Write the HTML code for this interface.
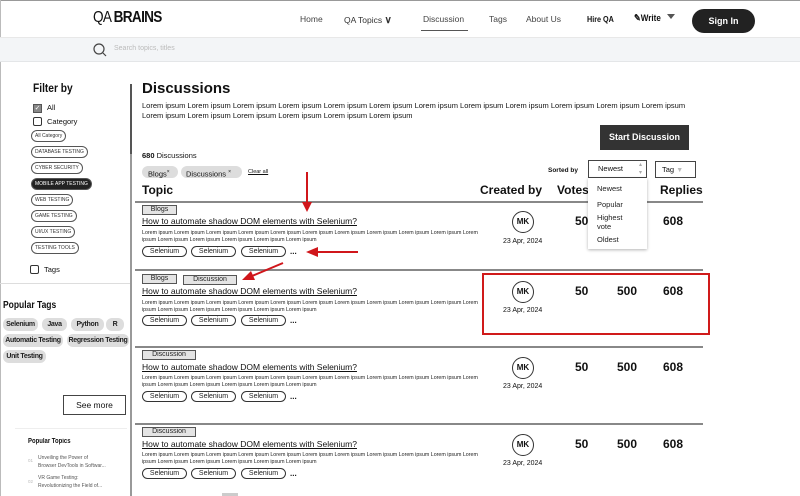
<!DOCTYPE html>
<html><head><meta charset="utf-8"><style>
*{margin:0;padding:0;box-sizing:border-box}
body{width:800px;height:496px;overflow:hidden;background:#fff;font-family:"Liberation Sans",sans-serif;color:#111;position:relative}
.a{position:absolute;white-space:nowrap}
.cond{font-family:"Liberation Sans",sans-serif;font-weight:bold}
.pill{position:absolute;border:1px solid #555;border-radius:8px;font-size:5px;line-height:10px;padding:0 3px;height:12px;color:#333;white-space:nowrap}
.chip{position:absolute;background:#ddd;border-radius:6px;font-size:7px;letter-spacing:-0.3px;line-height:13px;height:13px;text-align:center;font-weight:bold;color:#222;white-space:nowrap;overflow:visible}
.tagb{position:absolute;border:1px solid #555;background:#e4e4e4;font-size:7px;line-height:8px;height:10px;text-align:center;color:#222}
.sel{position:absolute;border:1px solid #333;border-radius:6px;font-size:7px;line-height:9px;height:11px;width:45px;text-align:center;color:#222}
.lor{position:absolute;font-size:5.3px;line-height:6.5px;color:#222;width:340px;white-space:normal}
.ttl{position:absolute;font-size:8.5px;text-decoration:underline;color:#111}
.mk{position:absolute;width:22px;height:22px;border:1px solid #333;border-radius:50%;font-size:8px;font-weight:bold;text-align:center;line-height:20px}
.num{position:absolute;font-size:12px;font-weight:bold}
.hr{position:absolute;left:135px;width:568px;height:2px;background:#888}
</style></head><body>
<div class="a" style="left:0;top:0;width:800px;height:1px;background:#999"></div>
<div class="a" style="left:0;top:0;width:1px;height:496px;background:#bbb"></div>
<div class="a" style="left:0;top:37px;width:800px;height:25px;background:#f3f5f7;border-top:1px solid #e8e8e8;border-bottom:1px solid #e4e6e8"></div>
<div class="a" style="left:93px;top:9px;font-size:16px;letter-spacing:-0.8px;transform:scaleX(0.85);transform-origin:left">QA <b>BRAINS</b></div>
<div class="a" style="left:300px;top:14px;font-size:8.5px;color:#444">Home</div>
<div class="a" style="left:344px;top:15px;font-size:8.5px;color:#333">QA Topics <b style="font-size:10px">∨</b></div>
<div class="a" style="left:423px;top:14px;font-size:8.5px;color:#444">Discussion</div>
<div class="a" style="left:421px;top:30px;width:47px;height:1px;background:#555"></div>
<div class="a" style="left:489px;top:14px;font-size:8.5px;color:#444">Tags</div>
<div class="a" style="left:526px;top:14px;font-size:8.5px;color:#444">About Us</div>
<div class="a cond" style="left:587px;top:14px;font-size:8.5px;transform:scaleX(0.85);transform-origin:left">Hire QA</div>
<div class="a cond" style="left:634px;top:13px;font-size:9.5px;transform:scaleX(0.85);transform-origin:left">✎Write</div>
<div class="a" style="left:667px;top:14px;width:0;height:0;border-left:4px solid transparent;border-right:4px solid transparent;border-top:5px solid #555"></div>
<div class="a cond" style="left:692px;top:9px;width:63px;height:24px;background:#222;color:#fff;border-radius:12px;font-size:9px;line-height:24px;text-align:center">Sign In</div>
<svg class="a" style="left:93px;top:43px" width="14" height="14"><circle cx="6" cy="6" r="5" fill="none" stroke="#444" stroke-width="1.2"/><path d="M10 10 L13 13" stroke="#444" stroke-width="1.2"/></svg>
<div class="a" style="left:114px;top:45px;font-size:7px;color:#bbb">Search topics, titles</div>

<div class="a" style="left:130px;top:84px;width:2px;height:412px;background:#999"></div>
<div class="a" style="left:130px;top:84px;width:2px;height:70px;background:#555"></div>
<div class="a cond" style="left:33px;top:81px;font-size:12px;transform:scaleX(0.85);transform-origin:left">Filter by</div>
<div class="a" style="left:33px;top:104px;width:9px;height:9px;background:#888;border:1px solid #555;color:#fff;font-size:7px;line-height:7px;text-align:center">✓</div>
<div class="a" style="left:47px;top:103px;font-size:7.5px">All</div>
<div class="a" style="left:33px;top:117px;width:9px;height:9px;border:1px solid #333;border-radius:2px"></div>
<div class="a" style="left:47px;top:117px;font-size:7.5px">Category</div>
<div class="pill" style="left:31px;top:130px">All Category</div>
<div class="pill" style="left:31px;top:146px">DATABASE TESTING</div>
<div class="pill" style="left:31px;top:162px">CYBER SECURITY</div>
<div class="pill" style="left:31px;top:178px;background:#222;color:#fff">MOBILE APP TESTING</div>
<div class="pill" style="left:31px;top:194px">WEB TESTING</div>
<div class="pill" style="left:31px;top:210px">GAME TESTING</div>
<div class="pill" style="left:31px;top:226px">UI/UX TESTING</div>
<div class="pill" style="left:31px;top:242px">TESTING TOOLS</div>
<div class="a" style="left:30px;top:265px;width:9px;height:9px;border:1px solid #333;border-radius:2px"></div>
<div class="a" style="left:44px;top:265px;font-size:7.5px">Tags</div>
<div class="a" style="left:0;top:283px;width:130px;height:1px;background:#ddd"></div>
<div class="a cond" style="left:3px;top:300px;font-size:10px;transform:scaleX(0.85);transform-origin:left">Popular Tags</div>
<div class="chip" style="left:3px;top:318px;width:35px">Selenium</div>
<div class="chip" style="left:42px;top:318px;width:25px">Java</div>
<div class="chip" style="left:71px;top:318px;width:33px">Python</div>
<div class="chip" style="left:106px;top:318px;width:18px">R</div>
<div class="chip" style="left:3px;top:334px;width:60px">Automatic Testing</div>
<div class="chip" style="left:67px;top:334px;width:62px">Regression Testing</div>
<div class="chip" style="left:3px;top:350px;width:43px">Unit Testing</div>
<div class="a" style="left:63px;top:395px;width:63px;height:20px;border:1px solid #444;font-size:8.5px;line-height:18px;text-align:center">See more</div>
<div class="a" style="left:15px;top:428px;width:112px;height:1px;background:#eee"></div>
<div class="a cond" style="left:28px;top:438px;font-size:7px;transform:scaleX(0.85);transform-origin:left">Popular Topics</div>
<div class="a" style="left:28px;top:458px;font-size:4.5px;color:#bbb">01</div>
<div class="a" style="left:38px;top:454px;font-size:5px;line-height:8px;color:#555">Unveiling the Power of<br>Browser DevTools in Softwar...</div>
<div class="a" style="left:28px;top:479px;font-size:4.5px;color:#bbb">02</div>
<div class="a" style="left:38px;top:474px;font-size:5px;line-height:8px;color:#555">VR Game Testing:<br>Revolutionizing the Field of...</div>

<div class="a" style="left:142px;top:80px;font-size:15px;font-weight:bold">Discussions</div>
<div class="a" style="left:142px;top:101px;font-size:7.5px;line-height:9.5px;white-space:normal;width:560px">Lorem ipsum Lorem ipsum Lorem ipsum Lorem ipsum Lorem ipsum Lorem ipsum Lorem ipsum Lorem ipsum Lorem ipsum Lorem ipsum Lorem ipsum Lorem ipsum Lorem ipsum Lorem ipsum Lorem ipsum Lorem ipsum Lorem ipsum Lorem ipsum</div>
<div class="a" style="left:600px;top:125px;width:89px;height:25px;background:#333;color:#fff;font-size:9px;font-weight:bold;line-height:25px;text-align:center">Start Discussion</div>
<div class="a" style="left:142px;top:151px;font-size:7.5px"><b>680</b> Discussions</div>
<div class="a" style="left:142px;top:166px;width:36px;height:12px;background:#ddd;border-radius:6px;font-size:7.5px;line-height:12px;padding-left:6px">Blogs<sup style="font-size:5px">×</sup></div>
<div class="a" style="left:181px;top:166px;width:61px;height:12px;background:#ddd;border-radius:6px;font-size:7.5px;line-height:12px;padding-left:5px">Discussions <sup style="font-size:5px">×</sup></div>
<div class="a" style="left:248px;top:169px;font-size:5.5px;text-decoration:underline">Clear all</div>
<div class="a" style="left:548px;top:167px;font-size:6.5px;font-weight:bold">Sorted by</div>
<div class="a" style="left:588px;top:160px;width:59px;height:18px;border:1px solid #444;font-size:7.5px;line-height:16px;padding-left:9px">Newest<span style="position:absolute;right:4px;top:0;font-size:6px;color:#aaa;line-height:8px">▴<br>▾</span></div>
<div class="a" style="left:655px;top:161px;width:41px;height:17px;border:1px solid #444;font-size:7.5px;line-height:15px;padding-left:6px">Tag <span style="color:#bbb;font-size:7px">▼</span></div>
<div class="a" style="left:142px;top:183px;font-size:12px;font-weight:bold">Topic</div>
<div class="a" style="left:480px;top:183px;font-size:12px;font-weight:bold">Created by</div>
<div class="a" style="left:557px;top:183px;font-size:12px;font-weight:bold">Votes</div>
<div class="a" style="left:660px;top:183px;font-size:12px;font-weight:bold">Replies</div>

<div class="hr" style="top:201px"></div>
<div class="hr" style="top:269px"></div>
<div class="hr" style="top:346px"></div>
<div class="hr" style="top:423px"></div>

<div class="tagb" style="left:142px;top:205px;width:35px">Blogs</div>
<div class="ttl" style="left:142px;top:216px">How to automate shadow DOM elements with Selenium?</div>
<div class="lor" style="left:142px;top:230px">Lorem ipsum Lorem ipsum Lorem ipsum Lorem ipsum Lorem ipsum Lorem ipsum Lorem ipsum Lorem ipsum Lorem ipsum Lorem ipsum Lorem ipsum Lorem ipsum Lorem ipsum Lorem ipsum Lorem ipsum Lorem ipsum</div>
<div class="sel" style="left:142px;top:246px">Selenium</div><div class="sel" style="left:191px;top:246px">Selenium</div><div class="sel" style="left:241px;top:246px">Selenium</div><div class="a" style="left:290px;top:247px;font-size:8px;font-weight:bold">...</div>
<div class="mk" style="left:512px;top:211px">MK</div>
<div class="a" style="left:503px;top:238px;font-size:7px">23 Apr, 2024</div>
<div class="num" style="left:575px;top:214px">50</div><div class="num" style="left:663px;top:214px">608</div>

<div class="tagb" style="left:142px;top:274px;width:35px">Blogs</div>
<div class="tagb" style="left:183px;top:275px;width:54px">Discussion</div>
<div class="ttl" style="left:142px;top:286px">How to automate shadow DOM elements with Selenium?</div>
<div class="lor" style="left:142px;top:300px">Lorem ipsum Lorem ipsum Lorem ipsum Lorem ipsum Lorem ipsum Lorem ipsum Lorem ipsum Lorem ipsum Lorem ipsum Lorem ipsum Lorem ipsum Lorem ipsum Lorem ipsum Lorem ipsum Lorem ipsum Lorem ipsum</div>
<div class="sel" style="left:142px;top:315px">Selenium</div><div class="sel" style="left:191px;top:315px">Selenium</div><div class="sel" style="left:241px;top:315px">Selenium</div><div class="a" style="left:290px;top:316px;font-size:8px;font-weight:bold">...</div>
<div class="mk" style="left:512px;top:281px">MK</div>
<div class="a" style="left:503px;top:307px;font-size:7px">23 Apr, 2024</div>
<div class="num" style="left:575px;top:284px">50</div><div class="num" style="left:617px;top:284px">500</div><div class="num" style="left:663px;top:284px">608</div>
<div class="a" style="left:482px;top:273px;width:228px;height:62px;border:2px solid #d01a1a"></div>

<div class="tagb" style="left:142px;top:350px;width:54px">Discussion</div>
<div class="ttl" style="left:142px;top:362px">How to automate shadow DOM elements with Selenium?</div>
<div class="lor" style="left:142px;top:375px">Lorem ipsum Lorem ipsum Lorem ipsum Lorem ipsum Lorem ipsum Lorem ipsum Lorem ipsum Lorem ipsum Lorem ipsum Lorem ipsum Lorem ipsum Lorem ipsum Lorem ipsum Lorem ipsum Lorem ipsum Lorem ipsum</div>
<div class="sel" style="left:142px;top:391px">Selenium</div><div class="sel" style="left:191px;top:391px">Selenium</div><div class="sel" style="left:241px;top:391px">Selenium</div><div class="a" style="left:290px;top:392px;font-size:8px;font-weight:bold">...</div>
<div class="mk" style="left:512px;top:357px">MK</div>
<div class="a" style="left:503px;top:383px;font-size:7px">23 Apr, 2024</div>
<div class="num" style="left:575px;top:360px">50</div><div class="num" style="left:617px;top:360px">500</div><div class="num" style="left:663px;top:360px">608</div>

<div class="tagb" style="left:142px;top:427px;width:54px">Discussion</div>
<div class="ttl" style="left:142px;top:439px">How to automate shadow DOM elements with Selenium?</div>
<div class="lor" style="left:142px;top:452px">Lorem ipsum Lorem ipsum Lorem ipsum Lorem ipsum Lorem ipsum Lorem ipsum Lorem ipsum Lorem ipsum Lorem ipsum Lorem ipsum Lorem ipsum Lorem ipsum Lorem ipsum Lorem ipsum Lorem ipsum Lorem ipsum</div>
<div class="sel" style="left:142px;top:468px">Selenium</div><div class="sel" style="left:191px;top:468px">Selenium</div><div class="sel" style="left:241px;top:468px">Selenium</div><div class="a" style="left:290px;top:469px;font-size:8px;font-weight:bold">...</div>
<div class="mk" style="left:512px;top:434px">MK</div>
<div class="a" style="left:503px;top:460px;font-size:7px">23 Apr, 2024</div>
<div class="num" style="left:575px;top:437px">50</div><div class="num" style="left:617px;top:437px">500</div><div class="num" style="left:663px;top:437px">608</div>
<div class="a" style="left:222px;top:493px;width:16px;height:3px;background:#ccc"></div>

<div class="a" style="left:588px;top:178px;width:59px;height:71px;background:#fff;box-shadow:0 1px 3px rgba(0,0,0,.3);font-size:7.5px;line-height:9px;color:#222">
<div style="position:absolute;top:6px;left:9px">Newest</div>
<div style="position:absolute;top:22px;left:9px">Popular</div>
<div style="position:absolute;top:35px;left:9px">Highest<br>vote</div>
<div style="position:absolute;top:57px;left:9px">Oldest</div>
</div>

<svg class="a" style="left:0;top:0" width="800" height="496">
<g stroke="#d0161b" stroke-width="2" fill="#d0161b">
<line x1="307" y1="172" x2="307" y2="204"/><polygon points="302,202 312,202 307,212" stroke="none"/>
<line x1="358" y1="252" x2="316" y2="252"/><polygon points="318,247 318,257 306,252" stroke="none"/>
<line x1="283" y1="263" x2="252" y2="276"/><polygon points="251,271 255,280 242,280" stroke="none"/>
</g></svg>
</body></html>
